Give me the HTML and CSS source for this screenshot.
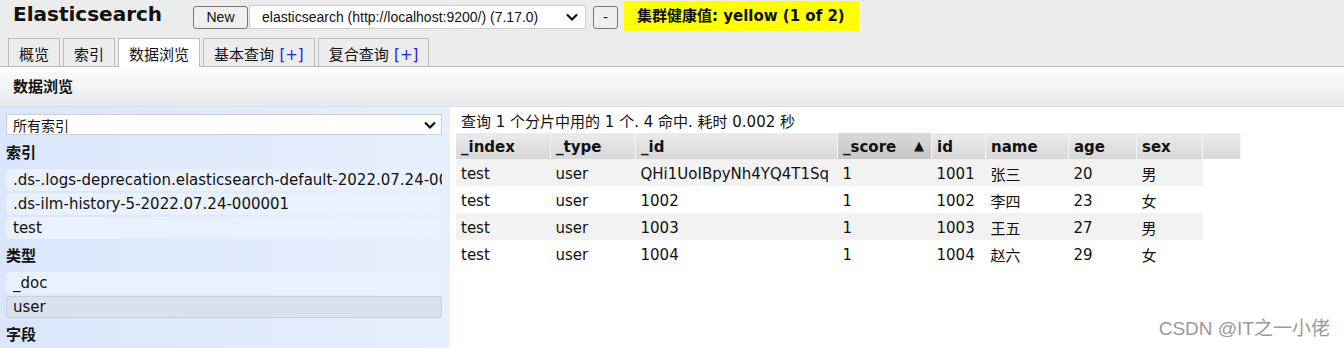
FILE: index.html
```html
<!DOCTYPE html>
<html lang="zh">
<head>
    <meta charset="UTF-8">
    <title>Elasticsearch</title>
    <link rel="stylesheet" href="styles.css">
</head>
<body>
    <div class="es-app">
        <div class="es-header">
            <h1 class="es-title">Elasticsearch</h1>
            <button class="es-btn es-btn-new">New</button>
            <div class="es-select es-cluster-select">
                <span>elasticsearch (http://localhost:9200/) (7.17.0)</span>
                <svg width="14" height="10" viewBox="0 0 14 10"><path d="M2 2.5 L7 7.5 L12 2.5" fill="none" stroke="#111" stroke-width="2.2"/></svg>
            </div>
            <button class="es-btn es-btn-minus">-</button>
            <div class="es-health">集群健康值: yellow (1 of 2)</div>
        </div>

        <div class="es-tabs">
            <div class="es-tab">概览</div>
            <div class="es-tab">索引</div>
            <div class="es-tab active">数据浏览</div>
            <div class="es-tab">基本查询 <span class="plus">[+]</span></div>
            <div class="es-tab">复合查询 <span class="plus">[+]</span></div>
        </div>

        <div class="es-subheader">数据浏览</div>

        <div class="es-browser">
            <div class="es-sidebar">
                <div class="es-select es-index-select">
                    <span>所有索引</span>
                    <svg width="14" height="10" viewBox="0 0 14 10"><path d="M2 2.5 L7 7.5 L12 2.5" fill="none" stroke="#111" stroke-width="2.2"/></svg>
                </div>
                <div class="es-section">索引</div>
                <div class="es-item">.ds-.logs-deprecation.elasticsearch-default-2022.07.24-000001</div>
                <div class="es-item">.ds-ilm-history-5-2022.07.24-000001</div>
                <div class="es-item">test</div>
                <div class="es-section">类型</div>
                <div class="es-item">_doc</div>
                <div class="es-item selected">user</div>
                <div class="es-section">字段</div>
            </div>

            <div class="es-results">
                <div class="es-summary">查询 1 个分片中用的 1 个. 4 命中. 耗时 0.002 秒</div>
                <table class="es-table">
                    <thead>
                        <tr>
                            <th class="c-index">_index</th>
                            <th class="c-type">_type</th>
                            <th class="c-id">_id</th>
                            <th class="c-score sorted">_score <span class="arrow">▲</span></th>
                            <th class="c-fid">id</th>
                            <th class="c-name">name</th>
                            <th class="c-age">age</th>
                            <th class="c-sex">sex</th>
                            <th class="c-pad"></th>
                        </tr>
                    </thead>
                    <tbody>
                        <tr><td>test</td><td>user</td><td>QHi1UoIBpyNh4YQ4T1Sq</td><td>1</td><td>1001</td><td>张三</td><td>20</td><td>男</td><td class="c-pad"></td></tr>
                        <tr><td>test</td><td>user</td><td>1002</td><td>1</td><td>1002</td><td>李四</td><td>23</td><td>女</td><td class="c-pad"></td></tr>
                        <tr><td>test</td><td>user</td><td>1003</td><td>1</td><td>1003</td><td>王五</td><td>27</td><td>男</td><td class="c-pad"></td></tr>
                        <tr><td>test</td><td>user</td><td>1004</td><td>1</td><td>1004</td><td>赵六</td><td>29</td><td>女</td><td class="c-pad"></td></tr>
                    </tbody>
                </table>
                <div class="es-watermark">CSDN @IT之一小佬</div>
            </div>
        </div>
    </div>
</body>
</html>
```

FILE: styles.css
```css
html, body {
    margin: 0;
    padding: 0;
    height: 100%;
    overflow: hidden;
}
body {
    font-family: "DejaVu Sans", Verdana, "Noto Sans CJK SC", sans-serif;
    font-size: 15px;
    color: #111;
    background: #fff;
}
.es-app {
    display: flex;
    flex-direction: column;
    height: 348px;
}
.es-header {
    display: flex;
    align-items: center;
    height: 34px;
    background: #ececec;
    padding-left: 13px;
}
.es-title {
    margin: 0 32px 0 0;
    font-size: 20px;
    font-weight: bold;
    position: relative;
    top: -3px;
    width: 148px;
    white-space: nowrap;
}
.es-btn {
    font-family: "Liberation Sans", Arial, sans-serif;
    font-size: 14px;
    background: #efefef;
    border: 1px solid #767676;
    border-radius: 3px;
    height: 23px;
    padding: 0 6px;
    color: #111;
}
.es-btn-new {
    width: 55px;
    margin-right: 1px;
}
.es-btn-minus {
    width: 25px;
    margin: 0 6px 0 7px;
}
.es-select {
    display: flex;
    align-items: center;
    justify-content: space-between;
    background: #fff;
    border: 1px solid #cfcfcf;
    box-sizing: border-box;
}
.es-cluster-select {
    font-family: "Liberation Sans", Arial, sans-serif;
    font-size: 14px;
    width: 337px;
    height: 24px;
    padding: 0 6px 0 12px;
}
.es-health {
    background: #ffff00;
    font-weight: bold;
    font-size: 15px;
    height: 30px;
    line-height: 30px;
    padding: 0 13px;
    width: 209px;
    white-space: nowrap;
    align-self: flex-start;
    margin-top: 1px;
}
.es-tabs {
    display: flex;
    align-items: flex-end;
    gap: 3px;
    padding-left: 8px;
    background: #ececec;
    border-bottom: 1px solid #b9b9b9;
    box-sizing: border-box;
    height: 33px;
}
.es-tab {
    height: 27px;
    line-height: 29px;
    padding: 0 10px;
    border: 1px solid #bdbdbd;
    border-bottom: none;
    background: #ececec;
    font-size: 15px;
    font-family: "Noto Sans CJK SC", "DejaVu Sans", sans-serif;
    white-space: nowrap;
}
.es-tab.active {
    background: #fff;
    height: 28px;
    margin-bottom: -1px;
}
.es-tab .plus {
    color: #2222ee;
    font-family: "DejaVu Sans", sans-serif;
    margin-left: 2px;
}
.es-subheader {
    height: 40px;
    line-height: 37px;
    padding-left: 13px;
    font-weight: bold;
    font-size: 15px;
    background: linear-gradient(#fbfcfd, #e8eaed);
    border-bottom: 1px solid #dcdfe3;
    box-sizing: border-box;
    font-family: "Noto Sans CJK SC", sans-serif;
}
.es-browser {
    display: flex;
    flex: 1;
    min-height: 0;
}
.es-sidebar {
    width: 450px;
    flex: none;
    box-sizing: border-box;
    padding: 7px 8px 0 6px;
    background: linear-gradient(90deg, #dae6fb, #e6effd);
    overflow: hidden;
}
.es-index-select {
    height: 21px;
    padding: 0 4px 0 6px;
    font-family: "Noto Sans CJK SC", sans-serif;
    font-size: 14px;
    margin-bottom: 6px;
}
.es-section {
    font-weight: bold;
    font-size: 15px;
    height: 22px;
    line-height: 22px;
    margin-bottom: 6px;
    font-family: "Noto Sans CJK SC", sans-serif;
}
.es-item {
    height: 22px;
    line-height: 22px;
    padding-left: 7px;
    margin-bottom: 2px;
    background: #e9f1fe;
    border-radius: 4px;
    white-space: nowrap;
    overflow: hidden;
}
.es-item + .es-section {
    margin-top: 5px;
}
.es-item.selected {
    background: #d8e1ed;
    box-shadow: inset 0 0 0 1px #c6d1df;
}
.es-results {
    flex: 1;
    padding: 5px 0 0 6px;
    position: relative;
}
.es-summary {
    padding-left: 5px;
    height: 21px;
    line-height: 21px;
}
.es-table {
    border-collapse: collapse;
}
.es-table th {
    text-align: left;
    font-weight: bold;
    height: 25px;
    padding: 1px 5px 0;
    background: linear-gradient(#ebebeb, #d7d7d7);
    border-right: 1px solid #f4f4f4;
    white-space: nowrap;
}
.es-table th.sorted {
    background: linear-gradient(#d9d9d9, #c6c6c6);
}
.es-table th .arrow {
    float: right;
    font-size: 13px;
    margin-right: 2px;
}
.es-table td {
    height: 25px;
    padding: 2px 5px 0;
    white-space: nowrap;
}
.es-table tbody tr:nth-child(odd) td {
    background: #f2f2f2;
}
.es-table tbody tr td.c-pad {
    background: #fff;
}
.c-index { width: 84px; }
.c-type { width: 74px; }
.c-id { width: 191px; }
.c-score { width: 83px; }
.c-fid { width: 43px; }
.c-name { width: 72px; }
.c-age { width: 57px; }
.c-sex { width: 55px; }
.c-pad { width: 27px; }
.es-watermark {
    position: absolute;
    right: 14px;
    bottom: 8px;
    color: #999;
    font-family: "Liberation Sans", "Noto Sans CJK SC", sans-serif;
    font-size: 19px;
}
```
